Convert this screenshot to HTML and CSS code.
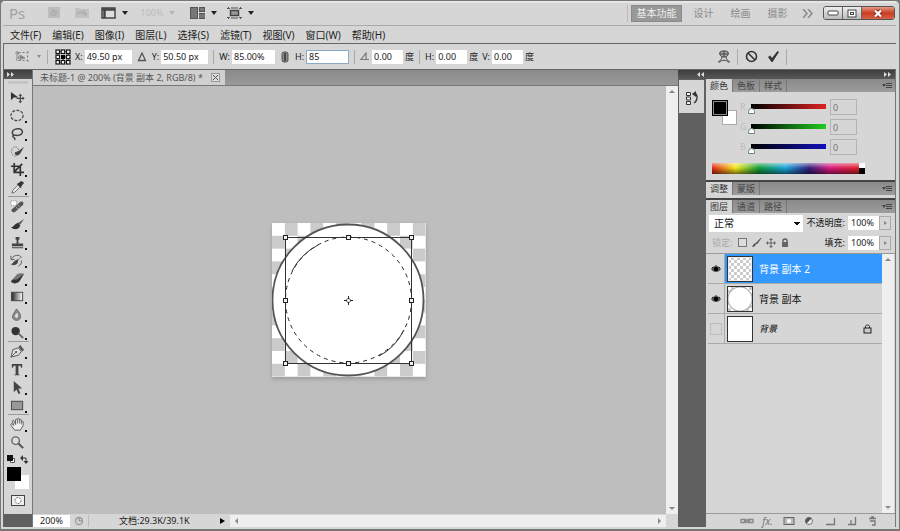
FILE: index.html
```html
<!DOCTYPE html>
<html lang="zh-CN">
<head>
<meta charset="utf-8">
<title>未标题-1</title>
<link rel="stylesheet" href="styles.css">
</head>
<body>
<div class="app">
  <header class="titlebar">
    <span class="logo">Ps</span>
    <button class="tb faded" aria-label="Bridge"><svg width="12" height="12" viewBox="0 0 12 12"><rect width="12" height="11" fill="#bdbdbd"/><path d="M3 3h4v2H3v3h4V5M8 8V5h2" fill="none" stroke="#a8a8a8"/></svg></button>
    <button class="tb faded" aria-label="Mini Bridge"><svg width="14" height="12" viewBox="0 0 14 12"><path d="M0 1h5l1 1h8v9H0z" fill="#c2c2c2"/><path d="M3 8V4l2 2 2-2v4M9 3v5h2V6H9" fill="none" stroke="#a8a8a8"/></svg></button>
    <button class="tb wide" aria-label="显示"><svg width="15" height="12" viewBox="0 0 15 12"><rect x="1" y="1" width="13" height="10" fill="#ddd" stroke="#444" stroke-width="1.5"/><path d="M1 2.5h13M3.5 2v9" stroke="#444" stroke-width="2.5"/></svg><i class="caret"></i></button>
    <button class="tb zoomlevel">100%<i class="caret"></i></button>
    <button class="tb wide" aria-label="排列文档"><svg width="15" height="12" viewBox="0 0 15 12"><path d="M0 0h8v12H0zM9 0h6v5H9zM9 6h6v6H9z" fill="#555"/><path d="M2 1v10M4 1v10M6 1v10M11 1v3M13 1v3M9 8h6M9 10h6" stroke="#999"/></svg><i class="caret"></i></button>
    <button class="tb wide" aria-label="屏幕模式"><svg width="15" height="12" viewBox="0 0 15 12"><rect x="3.500" y="3.500" width="8" height="5" fill="#999" stroke="#444" stroke-width="1.500"/><path d="M0 1.500h3M1.500 0v2M12 1.500h3M13.500 0v2M0 10.500h3M1.500 10v2M12 10.500h3M13.500 10v2M4 1h7M4 11h7" stroke="#555"/></svg><i class="caret"></i></button>
    <nav class="workspaces">
      <button class="ws active">基本功能</button>
      <button class="ws">设计</button>
      <button class="ws">绘画</button>
      <button class="ws">摄影</button>
      <button class="more" aria-label="更多"><svg width="12" height="9" viewBox="0 0 12 9"><path d="M1 0l4 4.500L1 9M6 0l4 4.500L6 9" fill="none" stroke="#8a8a8a" stroke-width="1.500"/></svg></button>
    </nav>
    <div class="winbtns">
      <button class="win min" aria-label="最小化"><svg width="12" height="6" viewBox="0 0 12 6"><rect x="1" y="1" width="10" height="4" rx="1" fill="#fff" stroke="#444"/></svg></button>
      <button class="win max" aria-label="最大化"><svg width="10" height="9" viewBox="0 0 10 9"><rect x="1" y="1" width="8" height="7" fill="#fff" stroke="#444"/><rect x="3.500" y="3.500" width="3" height="2" fill="#fff" stroke="#444"/></svg></button>
      <button class="win close" aria-label="关闭"><svg width="12" height="9" viewBox="0 0 12 9"><path d="M3 1.500l6 6M9 1.500l-6 6" stroke="#8e2d20" stroke-width="4"/><path d="M3 1.500l6 6M9 1.500l-6 6" stroke="#fff" stroke-width="2.200"/></svg></button>
    </div>
  </header>

  <nav class="menubar">
    <button>文件(F)</button><button>编辑(E)</button><button>图像(I)</button><button>图层(L)</button><button>选择(S)</button><button>滤镜(T)</button><button>视图(V)</button><button>窗口(W)</button><button>帮助(H)</button>
  </nav>

  <section class="options">
    <button class="preset" aria-label="工具预设"><svg width="15" height="13" viewBox="0 0 15 13"><rect x="3.500" y="2.500" width="9" height="8" fill="none" stroke="#777" stroke-dasharray="2 2"/><path d="M0 3h3M2 1v10M5 5l5 3-3 .5L5 10zM12 2h2M12 11h2" stroke="#888" fill="#888"/></svg><i class="caret small"></i></button>
    <i class="vsep"></i>
    <svg class="refgrid" width="16" height="16" viewBox="0 0 16 16"><path d="M2.500 2.500h11v11h-11zM8 2v12M2 8h12" fill="none" stroke="#222" stroke-dasharray="1 1"/><g fill="#fff" stroke="#111" stroke-width="1.200"><rect x="1" y="1" width="3.500" height="3.500"/><rect x="6.200" y="1" width="3.500" height="3.500"/><rect x="11.500" y="1" width="3.500" height="3.500"/><rect x="1" y="6.200" width="3.500" height="3.500"/><rect x="11.500" y="6.200" width="3.500" height="3.500"/><rect x="1" y="11.500" width="3.500" height="3.500"/><rect x="6.200" y="11.500" width="3.500" height="3.500"/><rect x="11.500" y="11.500" width="3.500" height="3.500"/></g><rect x="6" y="6" width="4" height="4" fill="#000"/></svg>
    <label class="f">X:<input class="w47" value="49.50 px"></label>
    <svg class="delta" width="10" height="10" viewBox="0 0 10 10"><path d="M5 1l3.500 7.500h-7z" fill="none" stroke="#555" stroke-width="1.300"/></svg>
    <label class="f">Y:<input class="w47" value="50.50 px"></label>
    <i class="vsep"></i>
    <label class="f">W:<input class="w43" value="85.00%"></label>
    <svg class="link" width="8" height="12" viewBox="0 0 8 12"><rect x="1" y="1" width="6" height="10" rx="2" fill="#888" stroke="#555"/><path d="M4 2v8" stroke="#333" stroke-width="1.500"/></svg>
    <label class="f">H:<input class="w43 focus" value="85"></label>
    <i class="vsep"></i>
    <label class="f"><svg width="10" height="9" viewBox="0 0 10 9"><path d="M0 7.500h9M1 7.500L6 1v6" fill="none" stroke="#777" stroke-width="1.200"/></svg><input class="w31" aria-label="旋转" value="0.00"><span>度</span></label>
    <i class="vsep"></i>
    <label class="f">H:<input class="w31" value="0.00"><span>度</span></label>
    <label class="f skew">V:<input class="w31" value="0.00"><span>度</span></label>
    <div class="commit">
      <button aria-label="变形"><svg width="14" height="14" viewBox="0 0 14 14"><path d="M3 2c2-1.500 6-1.500 8 0 1 3-1 5-4 5S2 5 3 2z" fill="#aaa" stroke="#444"/><path d="M7 1v6M3 4h8M5 7c0 2-2 4-4 5M9 7c0 2 2 4 4 5M2 12.500c3-3 7-3 10 0" fill="none" stroke="#444"/></svg></button>
      <i class="vsep"></i>
      <button aria-label="取消变换"><svg width="13" height="13" viewBox="0 0 13 13"><circle cx="6.500" cy="6.500" r="5" fill="none" stroke="#333" stroke-width="1.600"/><path d="M3 3l7 7" stroke="#333" stroke-width="1.600"/></svg></button>
      <button aria-label="进行变换"><svg width="13" height="13" viewBox="0 0 13 13"><path d="M1 7l2-1.500L5 8l5.500-7L12 2 5.500 12H4.500z" fill="#333"/></svg></button>
      <i class="vsep"></i>
    </div>
  </section>

  <main class="work">
    <aside class="tools">
      <div class="strip"><svg width="8" height="5" viewBox="0 0 8 5"><path d="M0 0l3 2.500L0 5zM4 0l3 2.500L4 5z" fill="#ddd"/></svg></div>
      <i class="grip"></i>
      <div class="toolgroup">
        <button aria-label="移动"><svg viewBox="0 0 16 16"><path d="M1 2v9l3-3 5 0z" fill="#333"/><path d="M11 5v8M7 9h8" stroke="#444" stroke-width="1.300"/><path d="M11 4l2 2H9zM11 14l2-2H9zM15.500 9l-2-2v4z" fill="#444"/></svg></button>
        <button class="sub" aria-label="椭圆选框"><svg viewBox="0 0 16 16"><ellipse cx="7.500" cy="8" rx="6.500" ry="5.500" fill="none" stroke="#444" stroke-width="1.300" stroke-dasharray="3 1.500"/></svg></button>
        <button class="sub" aria-label="套索"><svg viewBox="0 0 16 16"><path d="M4 10C0 6 5 2 10 3s4 7-2 7c-3 0-5-.5-5 1s3 1 2 4" fill="none" stroke="#444" stroke-width="1.600"/></svg></button>
        <button class="sub" aria-label="快速选择"><svg viewBox="0 0 16 16"><ellipse cx="5.500" cy="8" rx="4" ry="5" fill="none" stroke="#777" stroke-dasharray="2 1"/><path d="M15 3l-5 4-5 2c0 4 4 4 6 1z" fill="#444"/></svg></button>
        <button class="sub" aria-label="裁剪"><svg viewBox="0 0 16 16"><path d="M4.500 1v10H15M1 4.500h10V15M4 11l9-9" fill="none" stroke="#333" stroke-width="1.800"/></svg></button>
        <button class="sub" aria-label="吸管"><svg viewBox="0 0 16 16"><path d="M2 14l1-3 6-6 2 2-6 6z" fill="#eee" stroke="#666"/><path d="M8 4l4-3 3 2-3 4 0 2-5-5z" fill="#333"/></svg></button>
      </div>
      <div class="toolgroup">
        <button class="sub" aria-label="污点修复"><svg viewBox="0 0 16 16"><path d="M1 2h6v5H1z" fill="#fff" stroke="#888" stroke-dasharray="1 1"/><path d="M2 11l9-8c3-1 4 1 3 3l-9 8c-3 1-4-1-3-3z" fill="#555"/><path d="M6 8l3 3M8 6l3 3" stroke="#aaa"/></svg></button>
        <button class="sub" aria-label="画笔"><svg viewBox="0 0 16 16"><path d="M15 2L9 6l2 2z" fill="#555"/><path d="M9 6l2 3c-2 5-7 5-10 2 3 0 3-4 8-5z" fill="#333"/></svg></button>
        <button class="sub" aria-label="仿制图章"><svg viewBox="0 0 16 16"><path d="M6 2h4v3H9v4h5v3H2V9h5V5H6zM2 13h12v1H2z" fill="#444"/></svg></button>
        <button class="sub" aria-label="历史记录画笔"><svg viewBox="0 0 16 16"><path d="M15 3l-6 4-1 4c-3 3-6 2-7 1 3-1 3-4 7-5z" fill="#444"/><path d="M2 6c2-4 8-5 10-1M1 3v4h4M12 8c1 3-1 5-3 6" fill="none" stroke="#555"/></svg></button>
        <button class="sub" aria-label="橡皮擦"><svg viewBox="0 0 16 16"><path d="M1 11l6-7c3-2 6-2 8-1l-5 8c-3 2-7 3-9 0z" fill="#777"/><path d="M1 11l2-2c3 1 5 0 7-2l5-4-5 8c-3 3-7 3-9 0z" fill="#333"/></svg></button>
        <button class="sub" aria-label="渐变"><svg viewBox="0 0 16 16"><defs><linearGradient id="grad"><stop stop-color="#222"/><stop offset="1" stop-color="#fff"/></linearGradient></defs><rect x="1.500" y="3.500" width="12" height="9" fill="url(#grad)" stroke="#444"/></svg></button>
        <button class="sub" aria-label="模糊"><svg viewBox="0 0 16 16"><path d="M7 2c4 5 5 7 4 10-2 3-6 3-8 0C2 9 4 7 7 2z" fill="#888" stroke="#666"/><path d="M5 10c0-2 2-3 3-4 1 3 1 5-1 6z" fill="#ddd"/></svg></button>
        <button class="sub" aria-label="减淡"><svg viewBox="0 0 16 16"><circle cx="6" cy="6.500" r="4.500" fill="#333"/><path d="M9 9l5 5" stroke="#666" stroke-width="2"/></svg></button>
      </div>
      <div class="toolgroup">
        <button class="sub" aria-label="钢笔"><svg viewBox="0 0 16 16"><path d="M1 14l2-8 6-2 3 4-3 4z" fill="#ddd" stroke="#555"/><path d="M9 3l2-2 4 5-2 2z" fill="#555"/><path d="M1 14l5-5" stroke="#555"/><circle cx="6.500" cy="8.500" r="1" fill="#444"/></svg></button>
        <button class="sub" aria-label="文字"><svg viewBox="0 0 16 16"><path d="M2 2h11v4h-1l-1-2H9v9l2 1H4l2-1V4H4L3 6H2z" fill="#444"/></svg></button>
        <button class="sub" aria-label="路径选择"><svg viewBox="0 0 16 16"><path d="M4 1v12l3-3 2 5 2-1-2-5h4z" fill="#444"/></svg></button>
        <button class="sub" aria-label="矩形"><svg viewBox="0 0 16 16"><rect x="1.500" y="3.500" width="12" height="9" fill="#999" stroke="#444"/></svg></button>
      </div>
      <div class="toolgroup last">
        <button class="sub" aria-label="抓手"><svg viewBox="0 0 16 16"><path d="M4 9L2 7C1 7 1 8 1 9l4 5h6l3-5V5c-1-1-2 0-2 1V3c-1-1-2 0-2 1V2C9 1 8 1 8 3c-1-1-2-1-2 0v5L4 4C3 3 2 4 3 6z" fill="#eee" stroke="#555"/><path d="M8 3v4M10 4v3M12 5v3" stroke="#777"/></svg></button>
        <button aria-label="缩放"><svg viewBox="0 0 16 16"><circle cx="6" cy="6" r="4" fill="#ddd" stroke="#666" stroke-width="1.500"/><path d="M9 9l5 5" stroke="#555" stroke-width="2.200"/></svg></button>
      </div>
      <div class="minis"><svg width="9" height="9" viewBox="0 0 9 9"><path d="M3.500 3.500h4v4h-4z" fill="#fff" stroke="#555"/><path d="M0 0h6v6H0z" fill="#111"/></svg><svg width="9" height="9" viewBox="0 0 9 9"><path d="M2 3h4v3" fill="none" stroke="#333"/><path d="M0 3l3-3v6zM6 9L3.500 6h5z" fill="#333"/></svg></div>
      <div class="swatches"><i class="bg"></i><i class="fg"></i></div>
      <button class="mask" aria-label="快速蒙版"><svg width="14" height="11" viewBox="0 0 14 11"><rect x=".5" y=".5" width="13" height="10" fill="#eee" stroke="#444"/><circle cx="7" cy="5.500" r="3" fill="#fff" stroke="#666" stroke-dasharray="2 1"/></svg></button>
    </aside>

    <section class="document">
      <div class="tabs"><div class="tab">未标题-1 @ 200% (背景 副本 2, RGB/8) *<button aria-label="关闭文档"><svg width="9" height="9" viewBox="0 0 9 9"><rect x=".5" y=".5" width="8" height="8" fill="#ddd" stroke="#999"/><path d="M2 2l5 5M7 2L2 7" stroke="#555"/></svg></button></div></div>
      <div class="stage">
        <div class="canvas">
          <svg class="art" width="154" height="154" viewBox="0 0 154 154">
            <defs><pattern id="check" width="25.600" height="25.600" patternUnits="userSpaceOnUse"><path d="M0 0h25.600v25.600H0z" fill="#fff"/><path d="M12.800 0h12.800v12.800H12.800zM0 12.800h12.800v12.800H0z" fill="#cbcbcb"/></pattern></defs>
            <rect width="154" height="154" fill="url(#check)"/>
            <circle cx="76" cy="77" r="75.500" fill="#fff" stroke="#555" stroke-width="1.800"/>
            <circle cx="76.500" cy="77" r="63" fill="none" stroke="#222" stroke-dasharray="4 4"/>
            <path d="M20 48Q29 31 46 22M107 133Q123 125 132 107" fill="none" stroke="#333"/>
            <rect x="13.500" y="14.500" width="126" height="126" fill="none" stroke="#333"/>
            <g fill="#eee" stroke="#222"><rect x="11.500" y="12.500" width="4" height="4"/><rect x="74.500" y="12.500" width="4" height="4"/><rect x="137.500" y="12.500" width="4" height="4"/><rect x="11.500" y="75.500" width="4" height="4"/><rect x="137.500" y="75.500" width="4" height="4"/><rect x="11.500" y="138.500" width="4" height="4"/><rect x="74.500" y="138.500" width="4" height="4"/><rect x="137.500" y="138.500" width="4" height="4"/></g>
            <g stroke="#222" fill="none"><circle cx="76.500" cy="77.500" r="2" stroke="#666"/><path d="M76.500 73v3M76.500 79v3M72 77.500h3M78 77.500h3"/></g>
          </svg>
        </div>
        <div class="vscroll"><i class="up"></i><i class="down"></i></div>
      </div>
      <div class="status">
        <input class="zoom" aria-label="缩放比例" value="200%">
        <svg class="clock" width="10" height="10" viewBox="0 0 10 10"><circle cx="5" cy="5" r="3.500" fill="none" stroke="#999" stroke-width="1.300"/><path d="M5 2v3h4" fill="none" stroke="#888"/></svg>
        <span class="docsize">文档:29.3K/39.1K</span>
        <i class="play"></i>
        <div class="hscroll"><i class="left"></i><i class="right"></i></div>
        <i class="corner"></i>
      </div>
    </section>

    <aside class="dock">
      <div class="strip"><svg width="8" height="5" viewBox="0 0 8 5"><path d="M3 0L0 2.500 3 5zM7 0L4 2.500 7 5z" fill="#ddd"/></svg><svg width="8" height="5" viewBox="0 0 8 5"><path d="M0 0l3 2.500L0 5zM4 0l3 2.500L4 5z" fill="#ddd"/></svg></div>
      <div class="dockbody">
        <div class="icons"><button aria-label="历史记录"><svg width="14" height="15" viewBox="0 0 14 15"><path d="M1.500 1.500h4v3h-4zM1.500 6h4v3h-4zM1.500 10.500h4v3h-4z" fill="#eee" stroke="#333"/><path d="M8 3h3c2 3 1 7-2 9" fill="none" stroke="#333" stroke-width="1.500"/><path d="M7 3l4-3v6z" fill="#333"/></svg></button></div>
        <div class="panels">
          <section class="panel">
            <div class="ptabs"><button class="on">颜色</button><button>色板</button><button>样式</button><button class="pmenu" aria-label="颜色菜单"><svg width="10" height="5" viewBox="0 0 10 5"><path d="M0 1h4L2 4zM4 0h6v1H4zM4 2h6v1H4zM4 4h6v1H4z" fill="#444"/></svg></button></div>
            <div class="color">
              <div class="colorrow">
                <div class="pick"><i class="bg"></i><i class="fg"></i></div>
                <div class="sliders">
                  <div class="srow"><label for="r">R</label><input id="r" class="red" type="range" min="0" max="255" value="0"><input aria-label="R 值" class="num" value="0"></div>
                  <div class="srow"><label for="g">G</label><input id="g" class="green" type="range" min="0" max="255" value="0"><input aria-label="G 值" class="num" value="0"></div>
                  <div class="srow"><label for="b">B</label><input id="b" class="blue" type="range" min="0" max="255" value="0"><input aria-label="B 值" class="num" value="0"></div>
                </div>
              </div>
              <div class="spectrum"><i class="hues"></i><i class="ends"></i></div>
            </div>
          </section>
          <section class="panel">
            <div class="ptabs"><button class="on">调整</button><button>蒙版</button><button class="pmenu" aria-label="调整菜单"><svg width="10" height="5" viewBox="0 0 10 5"><path d="M0 1h4L2 4zM4 0h6v1H4zM4 2h6v1H4zM4 4h6v1H4z" fill="#444"/></svg></button></div>
            <div class="lip"></div>
          </section>
          <section class="panel layers">
            <div class="ptabs"><button class="on">图层</button><button>通道</button><button>路径</button><button class="pmenu" aria-label="图层菜单"><svg width="10" height="5" viewBox="0 0 10 5"><path d="M0 1h4L2 4zM4 0h6v1H4zM4 2h6v1H4zM4 4h6v1H4z" fill="#444"/></svg></button></div>
            <div class="lrow">
              <select aria-label="混合模式"><option>正常</option></select>
              <label for="op">不透明度:</label><input id="op" value="100%"><button class="step" aria-label="调整不透明度"></button>
            </div>
            <div class="lrow">
              <span class="lk">锁定:</span>
              <div class="lockset">
              <button aria-label="锁定透明像素"><svg width="10" height="10" viewBox="0 0 10 10"><rect x=".5" y=".5" width="8" height="8" fill="#ddd" stroke="#777"/></svg></button>
              <button aria-label="锁定图像像素"><svg width="10" height="10" viewBox="0 0 10 10"><path d="M9 0L4 5l1 1z" stroke="#666" fill="#666"/><path d="M4 5c0 3-2 4-4 4 1-2 2-4 4-4z" fill="#555"/></svg></button>
              <button aria-label="锁定位置"><svg width="10" height="10" viewBox="0 0 10 10"><path d="M5 1v8M1 5h8" stroke="#666"/><path d="M5 0l2 2H3zM5 10l2-2H3zM0 5l2-2v4zM10 5L8 3v4z" fill="#666"/></svg></button>
              <button aria-label="锁定全部"><svg width="10" height="10" viewBox="0 0 10 10"><path d="M3 5V2.500c0-2 4-2 4 0V5" fill="none" stroke="#555" stroke-width="1.300"/><rect x="2" y="4" width="6" height="5" fill="#666"/></svg></button>
              </div>
              <label for="fill">填充:</label><input id="fill" value="100%"><button class="step" aria-label="调整填充"></button>
            </div>
            <div class="list">
              <div class="items">
                <div class="layer selected"><button class="eye" aria-label="可见"><svg width="10" height="8" viewBox="0 0 10 8"><path d="M0 4c2-4 8-4 10 0-2 4-8 4-10 0z" fill="#555"/><circle cx="5" cy="4" r="2.200" fill="#000"/><path d="M1 2l1 1M5 0v1M9 2L8 3" stroke="#222"/></svg></button><div class="body"><i class="thumb checker"></i><span>背景 副本 2</span></div></div>
                <div class="layer"><button class="eye" aria-label="可见"><svg width="10" height="8" viewBox="0 0 10 8"><path d="M0 4c2-4 8-4 10 0-2 4-8 4-10 0z" fill="#555"/><circle cx="5" cy="4" r="2.200" fill="#000"/><path d="M1 2l1 1M5 0v1M9 2L8 3" stroke="#222"/></svg></button><div class="body"><i class="thumb disc"></i><span>背景 副本</span></div></div>
                <div class="layer"><button class="eye" aria-label="不可见"><i class="box"></i></button><div class="body"><i class="thumb"></i><span class="it">背景</span><svg class="padlock" width="9" height="10" viewBox="0 0 9 10"><path d="M2.500 4V2.500c0-2 4-2 4 0V4" fill="none" stroke="#222"/><rect x="1" y="4" width="7" height="5" fill="#ccc" stroke="#222"/></svg></div></div>
              </div>
              <div class="vscroll"><i class="up"></i><i class="down"></i></div>
            </div>
            <div class="foot">
              <button aria-label="链接图层"><svg width="14" height="10" viewBox="0 0 14 10"><path d="M1 3.500h5v3H1zM8 3.500h5v3H8zM4 5h6" fill="none" stroke="#888" stroke-width="1.300"/></svg></button>
              <button class="fx">fx.</button>
              <button aria-label="添加蒙版"><svg width="12" height="10" viewBox="0 0 12 10"><rect x="1" y="1.500" width="10" height="7" fill="#bbb" stroke="#666"/><circle cx="6" cy="5" r="2" fill="#fff"/></svg></button>
              <button aria-label="调整图层"><svg width="11" height="10" viewBox="0 0 11 10"><circle cx="5" cy="5" r="3.500" fill="#eee" stroke="#777"/><path d="M2.500 7.500a3.500 3.500 0 0 1 5-5z" fill="#555"/></svg></button>
              <button aria-label="新建组"><svg width="11" height="10" viewBox="0 0 11 10"><path d="M1 8.500h8.500V2" fill="none" stroke="#777" stroke-width="1.300"/></svg></button>
              <button aria-label="新建图层"><svg width="10" height="10" viewBox="0 0 10 10"><path d="M1 8.500h7.500V1M4 4v4" fill="none" stroke="#777" stroke-width="1.300"/></svg></button>
              <button aria-label="删除图层"><svg width="9" height="10" viewBox="0 0 9 10"><path d="M1 2.500h7M3 1h3M2 5h5v4H4" fill="none" stroke="#777" stroke-width="1.300"/></svg></button>
            </div>
          </section>
        </div>
      </div>
    </aside>
  </main>
</div>
</body>
</html>
```
FILE: styles.css
```css
* { box-sizing: border-box; }
html, body { height: 100%; margin: 0; }
body {
  font: 10px/14px "Noto Sans", "Noto Sans CJK SC", sans-serif;
  color: #222;
  background: #777;
}
button, input, select { font: inherit; color: inherit; margin: 0; padding: 0; border: 0; background: none; border-radius: 0; }
button { display: flex; align-items: center; justify-content: center; white-space: nowrap; }
input { outline: 0; min-width: 0; }
svg { display: block; flex: none; }
i { display: block; flex: none; }

.app {
  min-height: 100vh;
  display: flex;
  flex-direction: column;
  background: #d6d6d6;
  border: solid #777;
  border-width: 1px 1px 2px;
  border-radius: 5px 5px 0 0;
  padding: 0 3px 2px 2px;
}

/* Title bar */
.titlebar { display: flex; align-items: center; height: 25px; border-bottom: 1px solid #aaa; box-shadow: inset 0 2px #e6e6e6; }
.logo { width: 37px; padding-left: 6px; font-size: 15px; color: #a2a2a2; }
.tb { width: 26px; height: 20px; gap: 6px; }
.tb.faded { width: 28px; }
.tb.wide { width: 30px; justify-content: flex-start; margin-left: 5px; margin-right: 2px; }
.tb.zoomlevel { width: 42px; color: #bcbcbc; margin: 0 6px 0 4px; font-size: 9px; }
.caret { border: solid transparent; border-width: 4px 3px 0; border-top-color: #222; }
.zoomlevel .caret { border-top-color: #b4b4b4; }
.caret.small { border-width: 3px 2px 0; border-top-color: #888; }
.workspaces { display: flex; align-items: center; margin-left: auto; padding-left: 3px; border-left: 1px solid #bbb; }
.ws { width: 37px; height: 17px; color: #8b8b8b; }
.ws.active { width: 51px; margin-right: 3px; background: #989898; color: #eee; border: 1px solid #8a8a8a; }
.more { width: 24px; height: 17px; }
.winbtns { display: flex; margin: 0 1px 0 3px; height: 14px; border: 1px solid #555; border-radius: 3px; overflow: hidden; }
.win { width: 19px; background: linear-gradient(#eee, #bbb); border-right: 1px solid #666; }
.win.close { width: 32px; border: 0; background: linear-gradient(#e49a86, #ca3c24 50%, #d86348); }

/* Menus and options */
.menubar { display: flex; height: 17px; gap: 11px; padding-left: 7px; align-items: center; }
.options { display: flex; align-items: center; height: 27px; padding-left: 10px; border: 1px solid #666; border-width: 1px 0 1px 1px; font-size: 9px; }
.preset { gap: 7px; width: 28px; }
.vsep { width: 1px; height: 14px; background: #aaa; margin: 0 5px; }
.refgrid { margin: 0 4px 0 2px; }
.f { display: flex; align-items: center; gap: 2px; }
.f input { height: 14px; background: #fff; padding-left: 2px; line-height: 14px; }
.w47 { width: 47px; }
.w43 { width: 43px; }
.w31 { width: 31px; }
.skew { margin-left: 4px; }
.f .focus { border: 1px solid #8caac4; }
.delta { margin: 0 5px; }
.link { margin: 0 6px; }
.commit { display: flex; align-items: center; margin-left: auto; margin-right: 107px; }
.commit button { width: 22px; height: 20px; }
.commit .vsep { height: 16px; margin: 0 2px; }

.work { flex: 1; display: flex; min-height: 0; }
.strip { display: flex; align-items: center; justify-content: space-between; height: 9px; background: linear-gradient(#3e3e3e, #585858); padding: 0 3px; flex: none; }

/* Toolbox */
.tools { width: 29px; border-left: 1px solid #666; background: #d6d6d6; display: flex; flex-direction: column; align-items: center; border-bottom: 13px solid #606060; }
.tools .strip { width: 100%; }
.grip { width: 20px; height: 3px; margin: 2px 0 4px; background: #c4c4c4; }
.toolgroup { border-bottom: 1px solid #999; width: 21px; }
.toolgroup.last { border: 0; }
.toolgroup button { width: 21px; height: 18px; position: relative; justify-content: flex-start; padding-left: 2px; }
.toolgroup svg { width: 15px; height: 15px; }
.sub::after { content: ""; position: absolute; right: 2px; bottom: 1px; width: 2px; height: 2px; background: #111; }
.minis { display: flex; gap: 4px; margin-top: 4px; }
.swatches { display: grid; grid-template-columns: 8px 6px 8px; grid-template-rows: 8px 6px 8px; margin-top: 3px; }
.bg { grid-area: 2 / 2 / 4 / 4; background: #fff; }
.fg { grid-area: 1 / 1 / 3 / 3; background: #000; }
.mask { margin-top: 6px; }

/* Document window */
.document { flex: 1; display: flex; flex-direction: column; min-width: 0; border-left: 1px solid #777; }
.tabs { height: 16px; background: linear-gradient(#8a8a8a, #999); border-bottom: 1px solid #777; display: flex; }
.tab { display: flex; align-items: center; gap: 8px; padding: 0 5px 0 7px; background: #d0d0d0; color: #555; font-size: 9px; }
.stage { flex: 1; display: flex; background: #bebebe; }
.canvas { flex: 1; display: flex; align-items: center; justify-content: center; padding-right: 2px; }
.art { box-shadow: 0 2px 4px #999; }
.vscroll { width: 12px; background: #efefef; display: flex; flex-direction: column; justify-content: space-between; align-items: center; padding: 4px 0; }
.up { border: solid transparent; border-width: 0 3px 3px; border-bottom-color: #888; }
.down { border: solid transparent; border-width: 3px 3px 0; border-top-color: #888; }
.status { display: flex; align-items: center; height: 13px; background: #d6d6d6; font-size: 9px; line-height: 12px; }
.zoom { width: 37px; height: 12px; background: #fff; padding-left: 7px; }
.clock { margin: 0 4px; }
.docsize { width: 132px; padding-left: 30px; border-left: 1px solid #bbb; }
.play { border: solid transparent; border-width: 3px 0 3px 5px; border-left-color: #000; margin-right: 5px; }
.hscroll { flex: 1; height: 12px; background: #efefef; display: flex; align-items: center; justify-content: space-between; padding: 0 5px; }
.left { border: solid transparent; border-width: 3px 3px 3px 0; border-right-color: #888; }
.right { border: solid transparent; border-width: 3px 0 3px 3px; border-left-color: #888; }
.corner { width: 12px; }

/* Panel dock */
.dock { width: 218px; display: flex; flex-direction: column; background: #606060; border-right: 1px solid #777; }
.dock .strip { padding-left: 19px; }
.dockbody { flex: 1; display: flex; }
.icons { width: 28px; padding: 1px 2px 0 1px; }
.icons button { width: 100%; height: 33px; background: #d6d6d6; padding-top: 4px; }
.panels { flex: 1; display: flex; flex-direction: column; gap: 2px; min-width: 0; background: #444; }
.panel { background: #d6d6d6; }
.ptabs { display: flex; height: 13px; background: linear-gradient(#8a8a8a, #9c9c9c); font-size: 9px; line-height: 13px; }
.ptabs button { width: 27px; color: #444; border-right: 1px solid #777; }
.ptabs .on { background: #d6d6d6; color: #333; }
.ptabs .pmenu { width: 16px; margin-left: auto; border: 0; }
.color { padding: 5px 6px; height: 88px; }
.colorrow { display: flex; height: 66px; }
.pick { display: grid; margin-top: 3px; width: 28px; grid-template-columns: 10px 6px 9px; grid-template-rows: 10px 6px 9px; height: 25px; }
.pick .fg { border: 1px solid #000; box-shadow: inset 0 0 0 1px #888; }
.pick .bg { border: 1px solid #aaa; }
.srow { display: flex; align-items: center; height: 20px; }
.srow label { width: 11px; color: #bbb; font-size: 9px; }
.num { width: 27px; height: 16px; margin-left: 4px; border: 1px solid #b4b4b4; padding-left: 2px; color: #777; font-size: 9px; }
input[type=range] { appearance: none; width: 75px; height: 14px; background-repeat: no-repeat; background-position: 0 4px; background-size: 100% 5px; }
input[type=range]::-webkit-slider-thumb { appearance: none; width: 7px; height: 6px; margin-top: 8px; margin-left: -3px; background: #fff; border: 1px solid #687; border-radius: 4px 4px 0 0; }
.red { background-image: linear-gradient(90deg, #000, #dd2222); }
.green { background-image: linear-gradient(90deg, #000, #22cc22); }
.blue { background-image: linear-gradient(90deg, #000, #1111bb); }
.spectrum { display: flex; width: 153px; height: 11px; }
.hues { flex: 1; background: linear-gradient(#fff8, transparent 45%, #0003 65%, #0008), linear-gradient(90deg, #e32418, #f6e91e 16%, #119b3b 32%, #1aa5dc 50%, #30207e 66%, #d81b80 80%, #e22228); }
.ends { width: 6px; background: linear-gradient(#fff 50%, #000 50%); }
.lip { height: 3px; }

/* Layers */
.layers { flex: 1; display: flex; flex-direction: column; }
.lrow { display: flex; align-items: center; height: 20px; padding: 0 4px 0 3px; }
.lrow select {
  width: 94px;
  height: 17px;
  appearance: none;
  padding-left: 5px;
  color: #111;
  background: #fff;
  background-image: linear-gradient(to top right, transparent 50%, #111 50%), linear-gradient(to top left, transparent 50%, #111 50%);
  background-repeat: no-repeat;
  background-size: 3px 4px;
  background-position: 85px 7px, 88px 7px;
}
.lrow label { flex: 1; text-align: right; padding-right: 3px; white-space: nowrap; color: #111; font-size: 9px; }
.lrow input { width: 31px; height: 14px; background: #fff; padding-left: 3px; font-size: 9px; }
.step { width: 12px; height: 14px; border: 1px solid #aaa; }
.step::after { content: ""; border: solid transparent; border-width: 2px 0 2px 3px; border-left-color: #888; }
.lk { color: #aaa; width: 29px; padding-left: 3px; font-size: 9px; }
.lockset { display: flex; gap: 4px; }
.list { flex: 1; display: flex; border-top: 1px solid #999; padding-right: 1px; }
.items { flex: 1; padding-left: 2px; }
.layer { display: flex; height: 30px; border-bottom: 1px solid #aaa; color: #111; }
.eye { width: 17px; border-right: 1px solid #aaa; }
.box { width: 12px; height: 12px; border: 1px solid #bbb; }
.body { flex: 1; display: flex; align-items: center; gap: 6px; padding: 0 10px 0 2px; }
.selected .body { background: #3399ff; color: #fff; }
.thumb { width: 26px; height: 26px; background: #fff; border: 1px solid #333; }
.checker { background: repeating-conic-gradient(#ccc 0 25%, #fff 0 50%) 0 0 / 6px 6px; }
.selected .thumb { box-shadow: inset 0 0 0 1px #eee; }
.disc { background: radial-gradient(circle, #fff 0 11px, #aaa 12px, transparent 13px), repeating-conic-gradient(#ccc 0 25%, #fff 0 50%) 0 0 / 6px 6px; }
.it { font-style: italic; font-size: 9px; }
.padlock { margin-left: auto; }
.foot { display: flex; height: 14px; border-top: 1px solid #999; justify-content: flex-end; align-items: center; padding-right: 12px; color: #777; }
.foot button { width: 21px; }
.fx { font-style: italic; line-height: 10px; }
```
